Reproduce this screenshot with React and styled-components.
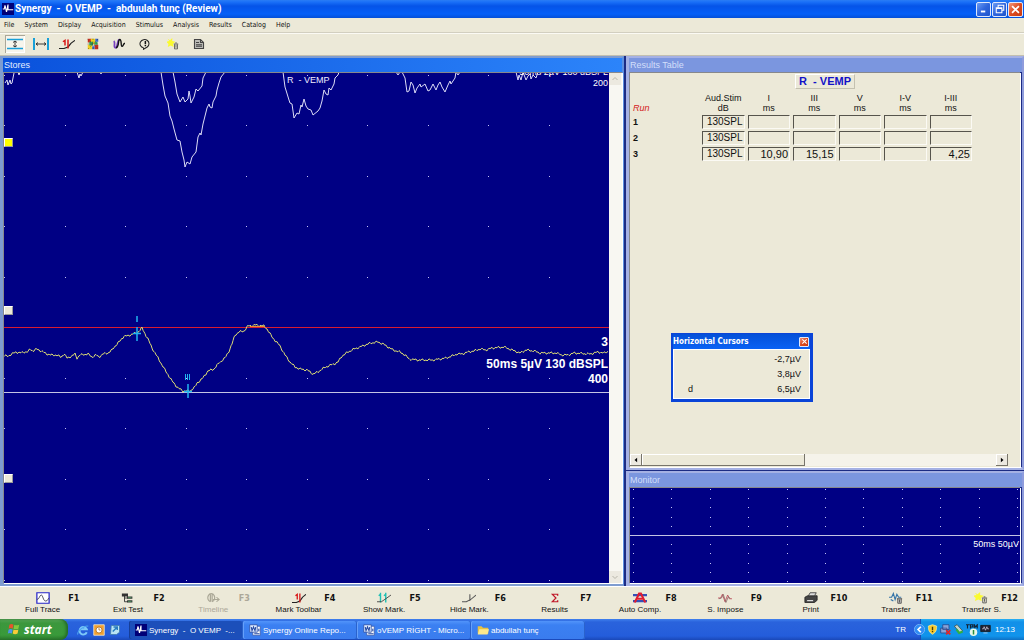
import React, { useState } from 'react';
import styled, { createGlobalStyle, css } from 'styled-components';

const GlobalStyle = createGlobalStyle`
    * { box-sizing: border-box; }
    body {
        margin: 0;
        background: #ece9d8;
        font-family: "Liberation Sans", Arial, sans-serif;
        font-size: 8px;
        color: #111;
    }
    button {
        font: inherit;
        color: inherit;
        margin: 0;
        padding: 0;
        border: 0;
        background: none;
    }
`;

const Page = styled.div`
    display: flex;
    flex-direction: column;
    min-height: 100vh;
`;

const TitleBar = styled.header`
    display: flex;
    align-items: center;
    gap: 1px;
    height: 18px;
    padding: 0 1px 0 2px;
    color: #fff;
    background: linear-gradient(#2a7df5 0, #1a70f8 2px, #0554e8 6px, #0560f8 14px, #0450d8 18px);

    h1 {
        flex-grow: 1;
        margin: 0;
        font: bold 10px/16px Roboto, sans-serif;
        white-space: pre;
    }
`;

const CaptionButton = styled.button`
    display: flex;
    align-items: center;
    justify-content: center;
    width: 15px;
    height: 15px;
    border: 1px solid #dfe8fb;
    border-radius: 2px;
    background: ${({ isClose }) => isClose ? 'linear-gradient(135deg, #f0977c, #dc4b20 50%, #c93a10)' : 'linear-gradient(135deg, #6c9cf4, #2f65dc 50%, #1f55cc)'};
`;

const MenuBar = styled.nav`
    display: flex;
    gap: 10px;
    height: 15px;
    padding: 0 4px;
    border-bottom: 1px solid #d2cfc0;
    font: 7px/14px "DejaVu Sans Condensed", sans-serif;
`;

const ToolBar = styled.div`
    display: flex;
    align-items: center;
    gap: 6px;
    height: 23px;
    padding: 0 5px 2px;
    border-top: 1px solid #fbfaf4;
    border-bottom: 1px solid #c2bfb0;
`;

const ToolButton = styled.button`
    display: flex;
    align-items: center;
    justify-content: center;
    width: 20px;
    height: 18px;
    margin-left: ${({ isSpaced }) => isSpaced ? 2 : 0}px;
    ${({ isPressed }) => isPressed && css`
        background: #f7f5ec;
        box-shadow: inset 1px 1px #aaa799, inset -1px -1px #fff;
    `}
`;

const Workspace = styled.main`
    display: grid;
    grid-template-columns: 624fr 398fr;
    gap: 2px;
    flex-grow: 1;
    background: #1c2c84;
`;

const RightColumn = styled.div`
    display: grid;
    grid-template-rows: 1fr 115px;
    gap: 1px;
`;

const Pane = styled.section`
    display: flex;
    flex-direction: column;
    min-width: 0;
    border: 2px solid ${({ isActive }) => isActive ? '#7e9cd0' : '#a5b1e4'};
    border-right-color: ${({ isActive }) => isActive ? '#5d8fe0' : '#8f9cdc'};
    border-left-width: 3px;
    border-bottom-width: 3px;

    h2 {
        flex-shrink: 0;
        margin: 0;
        padding-left: 1px;
        height: 14px;
        color: ${({ isActive }) => isActive ? '#e4efff' : '#d3dffa'};
        background: ${({ isActive }) => isActive ? 'linear-gradient(90deg, #0a52dc, #2c84fa)' : '#7b96df'};
        font: normal 9px/14px "Liberation Sans", sans-serif;
    }
`;

const PaneBody = styled.div`
    position: relative;
    display: flex;
    flex-direction: column;
    flex-grow: 1;
    margin-right: 2px;
    border: 1px solid #87888c;
    border-width: 1px 0 0 1px;
    box-shadow: 1px 1px #fff;
    background: #ece9d8;
`;

const StoresBody = styled(PaneBody)`
    flex-direction: row;
    margin-right: 0;
`;

const Plot = styled.div`
    position: relative;
    flex-grow: 1;
    background: #000084;
    overflow: hidden;

    svg {
        position: absolute;
        inset: 0;
        width: 100%;
        height: 100%;
    }
`;

const TraceName = styled.span`
    position: absolute;
    left: 283px;
    top: 2px;
    color: #eef;
    font-size: 9px;
    line-height: 10px;
    white-space: pre;
`;

const TraceInfo = styled.div`
    position: absolute;
    right: 1px;
    top: ${({ top }) => top}px;
    color: #fff;
    text-align: right;
    font-size: ${({ isBig }) => isBig ? 12 : 9}px;
    font-weight: ${({ isBig }) => isBig ? 'bold' : 'normal'};
    line-height: ${({ lineHeight }) => lineHeight}px;
`;

const StoreMark = styled.button`
    position: absolute;
    left: 0;
    top: ${({ top }) => top}px;
    width: 9px;
    height: 9px;
    border: 1px solid;
    border-color: #fff #999 #999 #fff;
    background: ${({ isSelected }) => isSelected ? '#ffff00' : '#ece9d8'};
`;

const VerticalScroll = styled.div`
    display: flex;
    flex-direction: column;
    justify-content: space-between;
    width: 13px;
    background: #f8f7f2;
`;

const ScrollButton = styled.button`
    display: flex;
    align-items: center;
    justify-content: center;
    width: 12px;
    height: 12px;
    background: #ece9e0;
    ${({ isRaised }) => isRaised && 'box-shadow: inset -1px -1px #77746a, inset 1px 1px #fff;'}
`;

const ResultsTitle = styled.h3`
    align-self: center;
    margin: 1px 0 2px;
    padding: 0 3px;
    border: 1px solid;
    border-color: #fff #c4c1b0 #c4c1b0 #fff;
    color: #1212c8;
    font: bold 11px/13px "Liberation Sans", sans-serif;
    white-space: pre;
`;

const ResultsGrid = styled.table`
    width: 345px;
    table-layout: fixed;
    border-spacing: 3px 2px;

    th, td {
        padding: 0;
    }
    thead th {
        font-size: 9px;
        font-weight: normal;
        line-height: 10px;
        vertical-align: bottom;
    }
    thead th:first-child {
        width: 66px;
        color: #d42020;
        font-style: italic;
        text-align: left;
    }
    tbody th {
        font-size: 9px;
        text-align: left;
    }
`;

const ResultCell = styled.td`
    height: 14px;
    border: 1px solid;
    border-color: #56544c #fbfaf4 #fbfaf4 #56544c;
    font-size: ${({ isMeasured }) => isMeasured ? 11 : 10}px;
    line-height: 12px;
    text-align: right;
    && { padding-right: 1px; }
`;

const HorizontalScroll = styled.div`
    display: flex;
    margin: auto 12px 1px 0;
    height: 12px;
    background: #f5f3ea;
`;

const ScrollThumb = styled.div`
    width: 43%;
    margin-right: auto;
    background: #ece9d8;
    box-shadow: inset -1px -1px #77746a, inset 1px 1px #fff;
`;

const CursorWindow = styled.section`
    position: absolute;
    left: 41px;
    top: 260px;
    width: 142px;
    border: 2px solid #0a44d8;
    border-width: 1px 3px 3px 2px;
    background: #ece9d8;

    header {
        display: flex;
        align-items: center;
        justify-content: space-between;
        height: 15px;
        padding-right: 1px;
        color: #fff;
        background: linear-gradient(#0450d8, #0a62f4);
        font: bold 8px/15px "DejaVu Sans Condensed", sans-serif;
    }
    dl {
        display: grid;
        grid-template-columns: 1fr auto;
        margin: 0;
        padding: 2px 8px 1px 14px;
        border: 1px solid #fff;
        font-size: 9px;
        line-height: 15px;
    }
    dt, dd { margin: 0; }
    dd { text-align: right; }
`;

const SmallClose = styled(CaptionButton)`
    width: 10px;
    height: 10px;
    border-radius: 1px;
`;

const FunctionBar = styled.div`
    display: grid;
    grid-template-columns: repeat(12, 1fr);
    height: 33px;
    border-top: 1px solid #fff;
`;

const FunctionKey = styled.button`
    display: grid;
    grid-template-columns: 1fr auto 1fr;
    grid-template-rows: 13px 10px;
    align-content: center;
    align-items: center;
    line-height: 10px;

    &:disabled { color: #aca899; }
    svg { grid-column: 2; }
    kbd {
        justify-self: end;
        padding-right: 6px;
        font: bold 9px/12px "DejaVu Sans Condensed", sans-serif;
    }
    span { grid-column: 1 / -1; white-space: nowrap; }
`;

const TaskBar = styled.footer`
    display: flex;
    height: 21px;
    color: #fff;
    background: linear-gradient(#3f80ee 0, #2a63dc 3px, #245ddb 17px, #1a48b8 21px);
`;

const StartButton = styled.button`
    display: flex;
    align-items: center;
    gap: 4px;
    width: 68px;
    padding-left: 7px;
    border-radius: 0 8px 8px 0;
    background: linear-gradient(#5cab5c 0, #3c973d 4px, #399a3a 16px, #2a752c 21px);
    box-shadow: inset -2px 0 3px #246a27;
    color: #fff;
    font: italic bold 12px/18px "Open Sans", sans-serif;
`;

const QuickLaunch = styled.div`
    display: flex;
    align-items: center;
    gap: 4px;
    padding: 0 8px 0 9px;
`;

const Task = styled.button`
    flex: 0 1 114px;
    display: flex;
    align-items: center;
    gap: 2px;
    height: 18px;
    margin-top: 2px;
    padding-left: 6px;
    border-radius: 2px;
    background: ${({ isActive }) => isActive ? '#1c4fba' : 'linear-gradient(#5294fa, #3b80f2 4px, #3a7cee)'};
    box-shadow: inset 1px 0 ${({ isActive }) => isActive ? '#163e98' : '#66a0fa'}, inset -1px 0 #2a62cc;
    white-space: pre;
`;

const Language = styled.span`
    margin-left: auto;
    padding-right: 14px;
    line-height: 21px;
`;

const Tray = styled.div`
    display: flex;
    align-items: center;
    gap: 2px;
    padding-right: 9px;
    border-left: 1px solid #1a4cb4;
    background: linear-gradient(#29b0f4 0, #1290e8 3px, #1094ec 17px, #0e70c4 21px);

    svg:first-child { margin-left: -7px; }
    time { padding-left: 2px; }
`;

const TRACE = [
    [4, 356], [8, 356], [12, 354], [16, 352], [20, 353], [24, 352], [28, 352], [30, 349], [33, 351], [37, 349],
    [41, 351], [45, 353], [50, 355], [56, 355], [61, 357], [64, 354], [67, 358], [72, 356], [75, 354], [77, 358],
    [80, 355], [88, 354], [92, 357], [96, 355], [99, 357], [103, 354], [108, 353], [112, 350], [116, 345],
    [120, 341], [124, 336], [128, 336], [132, 334], [137, 333], [142, 328], [144, 332], [148, 339], [152, 348],
    [158, 358], [165, 370], [172, 381], [178, 388], [183, 391], [190, 391], [195, 387], [197, 383], [202, 379],
    [208, 371], [214, 369], [219, 363], [225, 358], [229, 351], [232, 344], [235, 335], [239, 332], [244, 331],
    [248, 326], [256, 325], [264, 326], [267, 329], [272, 337], [280, 346], [285, 355], [290, 362], [295, 367],
    [300, 369], [307, 370], [313, 374], [318, 372], [322, 369], [328, 366], [334, 364], [338, 362], [342, 356],
    [348, 352], [354, 349], [360, 347], [365, 345], [371, 343], [378, 342], [383, 344], [388, 347], [393, 350],
    [400, 352], [405, 355], [409, 359], [417, 360], [433, 360], [440, 359], [446, 358], [452, 356], [457, 354],
    [462, 354], [468, 352], [474, 351], [480, 349], [486, 350], [492, 348], [504, 347], [512, 350], [520, 353],
    [526, 350], [534, 351], [540, 353], [556, 353], [562, 355], [568, 355], [574, 353], [590, 354], [598, 352],
    [604, 353], [609, 351],
];

const WHITE_TRACES = [
    '5,83 7,80 8,85 10,80 11,84 12,83 14,73',
    '18,72 19,75 20,72',
    '77,72 79,78 80,74 81,76 83,72',
    '100,72 101,74 102,72',
    '161,72 163,85 165,96 168,103 170,116 172,121 174,129 177,140 180,141 182,152 184,160 185,167 187,162 190,164 192,157 196,152 198,137 200,133 201,135 203,124 205,116 207,108 209,104 210,107 212,108 213,102 216,96 217,90 219,83 221,77 225,72',
    '173,72 175,82 177,94 180,102 183,97 185,102 188,99 189,91 190,96 191,103 194,97 196,89 198,91 202,86 203,78 206,72',
    '283,72 285,87 289,100 290,103 292,104 294,118 297,113 299,114 301,105 302,107 304,99 306,106 308,109 311,110 313,115 318,111 320,108 322,101 324,90 326,94 328,95 329,88 331,90 334,84 335,78 338,75 339,72',
    '396,72 398,75 400,72',
    '402,72 405,78 407,92 409,91 411,82 413,85 415,93 417,88 420,84 421,87 425,84 428,91 430,90 433,84 436,90 438,85 440,82 442,87 445,92 448,85 450,81 451,84 455,78 456,72 458,75 460,72',
    '516,72 518,80 519,75 521,80 523,72 526,80 528,76 530,74 531,79 533,75 536,78 538,72',
];

// adds the fine sampling noise between the knots of a trace
const noisyPath = (knots) => {
    const points = [];
    knots.slice(1).forEach(([x1, y1], i) => {
        const [x0, y0] = knots[i];
        for (let x = x0; x < x1; x += 1) {
            const noise = Math.sin(x * 1.9) * 0.7 + Math.sin(x * 0.83) * 0.6;
            points.push(`${x},${(y0 + (y1 - y0) * (x - x0) / (x1 - x0) + noise).toFixed(1)}`);
        }
    });
    return points.join(' ');
};

const Dots = ({ x, y, stepX, stepY }) => {
    const steps = [...Array(11).keys()];
    return steps.map(row => steps.map(col => (
        <rect
            key={`${row}-${col}`}
            x={Math.round(x + col * stepX)}
            y={Math.round(y + row * stepY)}
            width="1"
            height="1"
            fill="#c4c4f6"
        />
    )));
};

const ICONS = {
    app: <><path fill="#000078" d="M0 0h16v16H0z" /><path stroke="#fff" strokeWidth="1.5" d="M1 8h2l1-5 2 9 2-10v7h7" /></>,
    horizontal: <><path stroke="#18a0d8" strokeWidth="2" d="M0 2h16M0 14h16" /><path stroke="#222" d="M8 4v8M6 6l2-2 2 2M6 10l2 2 2-2" /></>,
    vertical: <><path stroke="#18a0d8" strokeWidth="2" d="M1 0v16M15 0v16" /><path stroke="#222" d="M3 8h10M5 6L3 8l2 2M11 6l2 2-2 2" /></>,
    mark: <><path stroke="#222" strokeWidth="1.4" d="M0 14h5l4-2 3-5 4-4" /><path stroke="#d81818" strokeWidth="1.5" d="M9 2v12M4 5l2-2v7" /></>,
    colors: <><path fill="#c83020" d="M1 1h5v5H1zM10 9h5v6h-5z" /><path fill="#f0d020" d="M5 1h6v7H5zM1 9h6v6H1z" /><path fill="#38a058" d="M3 5h5v5H3zM10 5h4v4h-4z" /><path fill="#3468c8" d="M11 1h4v4h-4zM7 11h3v4H7z" /><path stroke="#222" strokeDasharray="1 3" d="M1 2l14 12M2 14L14 2M8 1v13M1 8h14" /></>,
    wave: <><path stroke="#7840c0" strokeWidth="2.400" d="M1 4c3 2-1 8 2 9s3-10 5-11" /><path stroke="#111" strokeWidth="1.800" d="M4 13c5-1 2-11 5-11s1 9 3 9 1-3 4-4" /></>,
    info: <><path stroke="#222" strokeWidth="1.4" d="M6 13a6 5.500 0 1 1 5-1l-5 3v-2" /><path stroke="#111" strokeWidth="2" d="M8.500 4v4M8.500 9v2" /></>,
    transferStim: <><path fill="#fafa30" d="M1 1l3 2 3-3v4l4 1-3 3 1 4-4-2-4 2 1-4-3-3 4-1z" /><path stroke="#444" d="M9 8h6M10 8.500v6h4v-6M11 6.500h2M12 9v4" /></>,
    page: <path fill="#bdbdb8" stroke="#444" strokeWidth="1.500" d="M2 2h8l4 4v8H2zM10 2v4h4M4 6h4M4 9h8M4 11h8" />,
    fullTrace: <><path fill="#fff" stroke="#2424c8" strokeWidth="1.400" d="M1 1h14v14H1z" /><path stroke="#334" d="M1 10c3 0 3-6 5-6s2 8 5 8 2-3 4-4" /></>,
    exit: <><path fill="#333" d="M1 2h7v4H1zM7 6h6v3H7zM7 11h6v3H7z" /><path stroke="#222" d="M4 5v8h4M4 8h4" /><path stroke="#4da064" d="M8 7.500h4M8 12.500h4" /></>,
    timeline: <path stroke="#aaa796" strokeWidth="1.400" d="M5 13a4 5.500 0 1 1 2 0M5 3v10M7 3v10M8 10h7M12 7l3 3-3 3" />,
    showMark: <><path stroke="#20c0b4" strokeWidth="1.600" d="M4 1v13M10 1v13M2 5l2-2M8 5l2-2" /><path stroke="#333" d="M0 13h5l5-4 6-5" /></>,
    hideMark: <path stroke="#555" strokeWidth="1.200" d="M0 13h5l5-3 6-6M9 3v9" />,
    sigma: <path stroke="#c01828" strokeWidth="1.600" d="M11 5V3H5l4 5-4 5h6v-2" />,
    auto: <><path stroke="#3450b8" strokeWidth="3" d="M0 4h16M0 12h16" /><path stroke="#e01c30" strokeWidth="2.500" d="M2 14L7 2h2l5 12M5 9h6" /></>,
    impose: <><path stroke="#c04454" d="M0 8h3l2-5 3 10 3-9 2 5h3" /><path stroke="#866" d="M1 9l3-1 2-5 3 11 3-8 2 3" /></>,
    print: <><path fill="#444" stroke="#222" d="M1 7l3-2h11v6l-3 3H1z" /><path fill="#ddd" stroke="#333" d="M5 5l2-4h7l-2 4zM3 10h8v3H3z" /></>,
    transfer: <><path stroke="#3474a8" strokeWidth="1.300" d="M0 7h3l2-5 2 8 2-7 2 4h3M2 10l3 2" /><path stroke="#444" fill="#ccc" d="M9 9h6M10 9v6h4V9M12 10v4" /></>,
    flag: <><path fill="#e8542c" d="M3 2c2-1 3-1 5 0L7 7C5 6 4 6 2 7z" /><path fill="#84c83c" d="M9 2c2 1 3 1 6 0l-1 5c-2 1-4 1-6 0z" /><path fill="#4c94e8" d="M2 8c2-1 3-1 5 0l-1 5c-2-1-3-1-5 0z" /><path fill="#f8cc38" d="M8 8c2 1 4 1 6 0l-1 5c-2 1-4 1-6 0z" /></>,
    ie: <><path stroke="#7cc8f8" strokeWidth="2.600" d="M13 11a5 5 0 1 1 0-4H5" /><path stroke="#4ca4f0" strokeWidth="1.500" d="M1 14C0 10 10 1 15 3" /></>,
    outlook: <><path fill="#f0a030" stroke="#fff0d0" d="M1 1h14v14H1z" /><circle cx="8" cy="8" r="4" fill="#fff" stroke="#a86818" /><path stroke="#a86818" d="M8 5v3h2" /></>,
    desktop: <><path fill="#b8e4f4" stroke="#3c78a8" d="M3 2h11v9l-4 3H2z" /><path stroke="#287cc0" strokeWidth="2" d="M5 10l6-6M6 4h5v4" /></>,
    word: <><path fill="#fff" stroke="#3858a8" d="M5 3h10v12H5z" /><path fill="#dce8fc" stroke="#2448a0" d="M1 1h10v10H1z" /><path stroke="#2448a0" strokeWidth="1.400" d="M3 4l1 5 2-5 2 5 1-5M12 7h2M12 9h2M7 13h7" /></>,
    folder: <><path fill="#e8c040" d="M1 3h5l2 2h7v8H1z" /><path fill="#fce88c" d="M3 7h13l-2 7H1z" /></>,
    chevron: <><circle cx="8" cy="8" r="7.500" fill="#2f8cf4" stroke="#8cc4fc" /><path stroke="#fff" strokeWidth="2.500" d="M10 4L6 8l4 4" /></>,
    shield: <><path fill="#f8cc30" stroke="#fff0a0" d="M8 1l6 2c0 6-1 9-6 12C3 12 2 9 2 3z" /><path stroke="#4c3a08" strokeWidth="2" d="M8 4v5M8 10v2" /></>,
    network: <><path fill="#88a4d8" stroke="#223c80" d="M4 1h9v7H4zM1 6h9v7H1z" /><path stroke="#e02828" strokeWidth="2.500" d="M9 9l6 6M15 9l-6 6" /></>,
    usb: <><path fill="#c4d4c8" stroke="#344" d="M2 3l4-2 8 9-4 3z" /><path stroke="#30b040" strokeWidth="3" d="M5 8l4 5 5-2" /></>,
    monitor: <><path fill="#223" stroke="#111" d="M1 2h14v9H1z" /><path stroke="#dde" d="M3 7h2l1-3 2 5 2-5 1 3h2M5 13h6" /></>,
    tpm: <><path stroke="#123" strokeWidth="1.500" d="M0 1h5M2 1v5M6 6V1h3v3H6M11 6V1l2 3 2-3v5" /><circle cx="10" cy="11" r="5" fill="#e8f8e8" /><path stroke="#2a9040" strokeWidth="2" d="M10 8v6" /></>,
    minimize: <path stroke="#fff" strokeWidth="3" d="M3 12h7" />,
    restore: <path stroke="#fff" strokeWidth="1.700" d="M5 5V2h9v8h-3M2 6h9v8H2zM2 7h9" />,
    close: <path stroke="#fff" strokeWidth="2.500" d="M3 3l10 10M13 3L3 13" />,
    up: <path stroke="#b8b6aa" strokeWidth="2" d="M3 10l5-5 5 5" />,
    down: <path stroke="#b8b6aa" strokeWidth="2" d="M3 6l5 5 5-5" />,
    left: <path fill="#000" d="M11 2v12L4 8z" />,
    right: <path fill="#000" d="M5 2v12l7-6z" />,
};

const Icon = ({ name, size = 12, width = size }) => (
    <svg width={width} height={size} viewBox="0 0 16 16" preserveAspectRatio="none" fill="none" aria-hidden="true">
        {ICONS[name]}
    </svg>
);

const MENU = ['File', 'System', 'Display', 'Acquisition', 'Stimulus', 'Analysis', 'Results', 'Catalog', 'Help'];

const TOOLS = [
    { icon: 'horizontal', label: 'Horizontal cursors' },
    { icon: 'vertical', label: 'Vertical cursors' },
    { icon: 'mark', label: 'Mark toolbar' },
    { icon: 'colors', label: 'Colours' },
    { icon: 'wave', label: 'Waveform' },
    { icon: 'info', label: 'Info' },
    { icon: 'transferStim', label: 'Transfer', isSpaced: true },
    { icon: 'page', label: 'Report' },
];

const KEYS = [
    ['fullTrace', 'Full Trace'],
    ['exit', 'Exit Test'],
    ['timeline', 'Timeline', true],
    ['mark', 'Mark Toolbar'],
    ['showMark', 'Show Mark.'],
    ['hideMark', 'Hide Mark.'],
    ['sigma', 'Results'],
    ['auto', 'Auto Comp.'],
    ['impose', 'S. Impose'],
    ['print', 'Print'],
    ['transfer', 'Transfer'],
    ['transferStim', 'Transfer S.'],
];

const COLUMNS = [['Aud.Stim', 'dB'], ['I', 'ms'], ['III', 'ms'], ['V', 'ms'], ['I-V', 'ms'], ['I-III', 'ms']];

const RUNS = [
    ['130SPL', '', '', '', '', ''],
    ['130SPL', '', '', '', '', ''],
    ['130SPL', '10,90', '15,15', '', '', '4,25'],
];

const TASKS = [
    ['app', 'Synergy  -  O VEMP  -...'],
    ['word', 'Synergy Online Repo...'],
    ['word', 'oVEMP RİGHT - Micro...'],
    ['folder', 'abdullah tunç'],
];

const StoresPane = () => {
    const [selected, setSelected] = useState(0);

    return (
        <Pane isActive>
            <h2>Stores</h2>
            <StoresBody>
                <Plot>
                    <svg viewBox="4 73 605 510" preserveAspectRatio="none" fill="none">
                        <Dots x={4} y={75} stepX={60.5} stepY={50.45} />
                        {WHITE_TRACES.map(points => <polyline key={points} points={points} stroke="#dcdcf6" />)}
                        <path stroke="#d81c30" d="M4 327.500h605" />
                        <path stroke="#c4c4e4" d="M4 392.500h605" />
                        <polyline points={noisyPath(TRACE)} stroke="#dcdc74" />
                        <path stroke="#e89030" d="M250 326.500h15" />
                        <path stroke="#20b4f0" strokeWidth="1.500" d="M137 316v6M137 327v14M133 333.500h8M188 384v14M184 391.500h8" />
                        <path stroke="#20b4f0" d="M185.500 374v6M187.500 374v6M189.500 374v6" />
                    </svg>
                    <TraceName>R  - VEMP</TraceName>
                    <TraceInfo top={-6} lineHeight={11}>50ms 2µV 130 dBSPL<br />200</TraceInfo>
                    <TraceInfo top={262} lineHeight={15} isBig>3</TraceInfo>
                    <TraceInfo top={284} lineHeight={15} isBig>50ms 5µV 130 dBSPL<br />400</TraceInfo>
                    {[65, 233, 401].map((top, i) => (
                        <StoreMark
                            key={top}
                            top={top}
                            isSelected={selected === i}
                            onClick={() => setSelected(i)}
                            aria-label={`Store ${i + 1}`}
                        />
                    ))}
                </Plot>
                <VerticalScroll>
                    <ScrollButton aria-label="Scroll up"><Icon name="up" size={8} /></ScrollButton>
                    <ScrollButton aria-label="Scroll down"><Icon name="down" size={8} /></ScrollButton>
                </VerticalScroll>
            </StoresBody>
        </Pane>
    );
};

const ResultsPane = () => (
    <Pane>
        <h2>Results Table</h2>
        <PaneBody>
            <ResultsTitle>R  - VEMP</ResultsTitle>
            <ResultsGrid>
                <thead>
                    <tr>
                        <th scope="col">Run</th>
                        {COLUMNS.map(([name, unit]) => <th key={name} scope="col">{name}<br />{unit}</th>)}
                    </tr>
                </thead>
                <tbody>
                    {RUNS.map((run, i) => (
                        <tr key={i}>
                            <th scope="row">{i + 1}</th>
                            {run.map((value, col) => <ResultCell key={col} isMeasured={col > 0}>{value}</ResultCell>)}
                        </tr>
                    ))}
                </tbody>
            </ResultsGrid>
            <HorizontalScroll>
                <ScrollButton isRaised aria-label="Scroll left"><Icon name="left" size={6} /></ScrollButton>
                <ScrollThumb />
                <ScrollButton isRaised aria-label="Scroll right"><Icon name="right" size={6} /></ScrollButton>
            </HorizontalScroll>
            <CursorWindow>
                <header>
                    Horizontal Cursors
                    <SmallClose isClose aria-label="Close cursors"><Icon name="close" size={7} /></SmallClose>
                </header>
                <dl>
                    <dt /><dd>-2,7µV</dd>
                    <dt /><dd>3,8µV</dd>
                    <dt>d</dt><dd>6,5µV</dd>
                </dl>
            </CursorWindow>
        </PaneBody>
    </Pane>
);

const MonitorPane = () => (
    <Pane>
        <h2>Monitor</h2>
        <PaneBody>
            <Plot>
                <svg viewBox="630 488 390 95" preserveAspectRatio="none" fill="none">
                    <Dots x={633} y={489} stepX={38.4} stepY={9.2} />
                    <path stroke="#c4c4e4" d="M630 535.500h390" />
                </svg>
                <TraceInfo top={50} lineHeight={12}>50ms 50µV</TraceInfo>
            </Plot>
        </PaneBody>
    </Pane>
);

export default function App() {
    return (
        <Page>
            <GlobalStyle />
            <TitleBar>
                <Icon name="app" />
                <h1>Synergy  -  O VEMP  -  abduulah tunç (Review)</h1>
                <CaptionButton aria-label="Minimize"><Icon name="minimize" size={10} /></CaptionButton>
                <CaptionButton aria-label="Restore"><Icon name="restore" size={10} /></CaptionButton>
                <CaptionButton isClose aria-label="Close"><Icon name="close" size={11} /></CaptionButton>
            </TitleBar>
            <MenuBar>
                {MENU.map(item => <button key={item}>{item}</button>)}
            </MenuBar>
            <ToolBar>
                {TOOLS.map(({ icon, label, isSpaced }, i) => (
                    <ToolButton key={icon} isPressed={i === 0} isSpaced={isSpaced} aria-label={label}>
                        <Icon name={icon} width={i < 3 ? 16 : 12} />
                    </ToolButton>
                ))}
            </ToolBar>
            <Workspace>
                <StoresPane />
                <RightColumn>
                    <ResultsPane />
                    <MonitorPane />
                </RightColumn>
            </Workspace>
            <FunctionBar>
                {KEYS.map(([icon, label, disabled], i) => (
                    <FunctionKey key={label} disabled={disabled}>
                        <Icon name={icon} width={14} />
                        <kbd>F{i + 1}</kbd>
                        <span>{label}</span>
                    </FunctionKey>
                ))}
            </FunctionBar>
            <TaskBar>
                <StartButton><Icon name="flag" size={13} />start</StartButton>
                <QuickLaunch>
                    <Icon name="ie" />
                    <Icon name="outlook" />
                    <Icon name="desktop" />
                </QuickLaunch>
                {TASKS.map(([icon, label], i) => (
                    <Task key={label} isActive={i === 0}><Icon name={icon} />{label}</Task>
                ))}
                <Language>TR</Language>
                <Tray>
                    <Icon name="chevron" size={11} />
                    <Icon name="shield" size={11} />
                    <Icon name="network" size={11} />
                    <Icon name="usb" size={11} />
                    <Icon name="tpm" />
                    <Icon name="monitor" size={11} />
                    <time>12:13</time>
                </Tray>
            </TaskBar>
        </Page>
    );
}
